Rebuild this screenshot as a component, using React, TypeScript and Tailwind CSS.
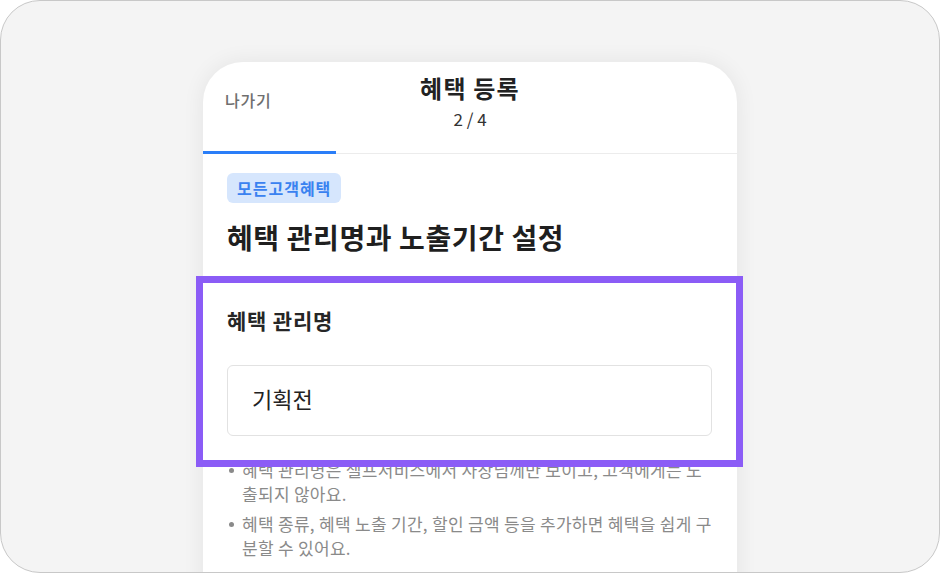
const notes = [
  "혜택 관리명은 셀프서비스에서 사장님께만 보이고, 고객에게는 노출되지 않아요.",
  "혜택 종류, 혜택 노출 기간, 할인 금액 등을 추가하면 혜택을 쉽게 구분할 수 있어요.",
];

export default function App() {
  return (
    <div className="w-[940px] h-[574px] bg-white font-['Noto_Sans_CJK_KR','Noto_Sans',sans-serif]">
      <div className="h-[573px] w-[940px] overflow-hidden rounded-[40px] border border-[#c8c8c8] bg-[#f4f4f4]">
        <div className="ml-[202px] mt-[61px] h-[560px] w-[534px] rounded-t-[40px] bg-white shadow-[0_0_22px_rgba(0,0,0,0.07)]">
          {/* header */}
          <div className="relative h-[89px]">
            <div className="absolute left-[22px] top-[26px] text-[16px] font-medium tracking-[0.8px] text-[#6f6f6f]">
              나가기
            </div>
            <div className="flex flex-col items-center pt-[10px]">
              <div className="text-[24px] font-bold leading-[32px] tracking-[1.2px] text-[#222]">
                혜택 등록
              </div>
              <div className="mt-[4px] text-[17px] leading-[22px] text-[#333]">
                2 / 4
              </div>
            </div>
          </div>
          <div className="relative h-[3px] border-b border-[#ececec]">
            <div className="h-[3px] w-[133px] bg-[#2a7ef8]" />
          </div>

          <div className="px-6 pt-[19px]">
            <span className="inline-flex h-[30px] items-center rounded-[6px] bg-[#d6e6fd] px-[10px] text-[16px] font-bold tracking-[1px] text-[#3a82f0]">
              모든고객혜택
            </span>
            <h1 className="mt-[15px] text-[28px] font-bold leading-[38px] tracking-[0.6px] text-[#1f1f1f]">
              혜택 관리명과 노출기간 설정
            </h1>
          </div>

          {/* highlighted field */}
          <div className="relative mt-[27px] px-6 pt-[22px] pb-[22px]">
            <div className="text-[21px] font-bold leading-[30px] tracking-[0.8px] text-[#262626]">
              혜택 관리명
            </div>
            <div className="mt-[30px] flex h-[71px] w-[485px] items-center rounded-[6px] border border-[#e2e2e2] px-6 pb-[4px] text-[22px] text-[#222]">
              기획전
            </div>
            <div className="pointer-events-none absolute -left-[7px] -right-[6px] -top-[7px] -bottom-[9px] border-[7px] border-[#8b5cf6]" />
          </div>

          <ul className="flex flex-col gap-[6px] pl-[26px] pr-[24px]">
            {notes.map((note) => (
              <li key={note} className="flex text-[17px] leading-[24px] tracking-[0.3px] text-[#8a8a8a]">
                <span className="mr-[8px] mt-[10px] h-[5px] w-[5px] shrink-0 rounded-full bg-[#8a8a8a]" />
                <span>{note}</span>
              </li>
            ))}
          </ul>
        </div>
      </div>
    </div>
  );
}
